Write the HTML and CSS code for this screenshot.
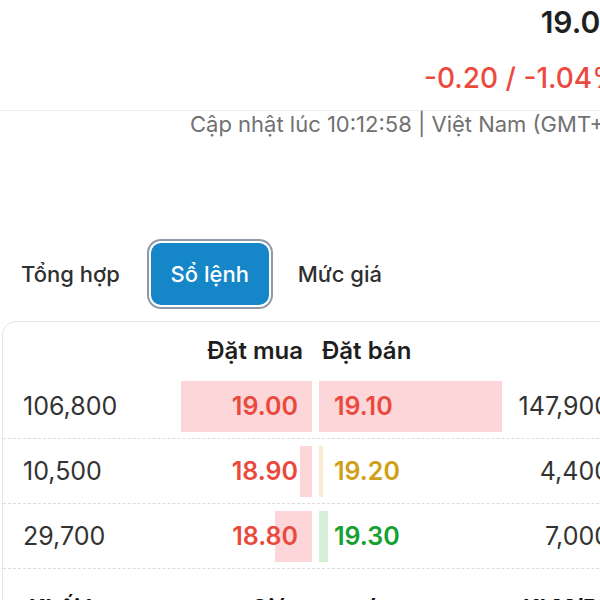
FILE: index.html
```html
<!DOCTYPE html>
<html lang="vi">
<head>
    <meta charset="UTF-8">
    <meta name="viewport" content="width=device-width, initial-scale=1.0">
    <title>Sổ lệnh</title>
    <link rel="stylesheet" href="styles.css">
</head>
<body>
    <div class="page">
        <div class="quote">
            <div class="price">19.00</div>
            <div class="change">-0.20 / -1.04%</div>
        </div>
        <div class="updated">Cập nhật lúc 10:12:58 | Việt Nam (GMT+7)</div>

        <div class="tabs">
            <button class="tab">Tổng hợp</button>
            <button class="tab active">Sổ lệnh</button>
            <button class="tab">Mức giá</button>
        </div>

        <div class="card">
            <div class="book-head">
                <span></span>
                <span class="head-buy">Đặt mua</span>
                <span class="head-sell">Đặt bán</span>
                <span></span>
            </div>

            <div class="book-row">
                <span class="qty">106,800</span>
                <span class="cell buy"><i class="bar bar-red" style="width: 100%"></i><b class="down">19.00</b></span>
                <span class="cell sell"><i class="bar bar-red" style="width: 100%"></i><b class="down">19.10</b></span>
                <span class="qty qty-right">147,900</span>
            </div>
            <div class="book-row">
                <span class="qty">10,500</span>
                <span class="cell buy"><i class="bar bar-red" style="width: 9%"></i><b class="down">18.90</b></span>
                <span class="cell sell"><i class="bar bar-yellow" style="width: 2%"></i><b class="ref">19.20</b></span>
                <span class="qty qty-right">4,400</span>
            </div>
            <div class="book-row">
                <span class="qty">29,700</span>
                <span class="cell buy"><i class="bar bar-red" style="width: 28%"></i><b class="down">18.80</b></span>
                <span class="cell sell"><i class="bar bar-green" style="width: 5%"></i><b class="up">19.30</b></span>
                <span class="qty qty-right">7,000</span>
            </div>

            <div class="match-head">
                <span>Khối lượng</span>
                <span>Giá</span>
                <span>+/-</span>
                <span>KLM/B</span>
            </div>
        </div>
    </div>
</body>
</html>
```

FILE: styles.css
```css
html, body {
    margin: 0;
    padding: 0;
    overflow: hidden;
}

body {
    font-family: Inter, "Noto Sans", Arial, sans-serif;
    background: #fff;
    color: #2b2b2b;
    width: 600px;
    height: 600px;
}

.page {
    width: 680px;
}

.quote {
    width: 620px;
    text-align: right;
    border-bottom: 1px solid #ededed;
    padding-top: 4px;
    padding-bottom: 14px;
}

.price {
    font-size: 30px;
    font-weight: 600;
    color: #1f1f1f;
    line-height: 36px;
}

.change {
    font-size: 28px;
    font-weight: 500;
    color: #ec4a3f;
    line-height: 36px;
    margin-top: 20px;
}

.updated {
    width: 624px;
    text-align: right;
    font-size: 22px;
    color: #717171;
    line-height: 27px;
}

.tabs {
    display: flex;
    align-items: center;
    padding-left: 21px;
    margin-top: 105px;
}

.tab {
    font-family: inherit;
    font-size: 22px;
    font-weight: 500;
    color: #2f2f2f;
    background: none;
    border: none;
    padding: 0;
    cursor: pointer;
}

.tab.active {
    background: #1586c8;
    color: #fff;
    width: 118px;
    height: 62px;
    border-radius: 10px;
    margin: 0 29px 0 31px;
    box-shadow: 0 0 0 2px #fff, 0 0 0 4px #8f99a8;
}

.card {
    margin-top: 16px;
    margin-left: 2px;
    border: 1px solid #e6e6e6;
    border-radius: 14px;
    height: 400px;
}

.book-head,
.book-row {
    display: grid;
    grid-template-columns: 158px 131px 190px 1fr;
    align-items: center;
    padding-left: 20px;
}

.book-head {
    font-size: 24px;
    font-weight: 600;
    color: #1e1e1e;
    height: 52px;
    padding-top: 4px;
    box-sizing: border-box;
}

.head-buy {
    text-align: right;
    padding-right: 9px;
}

.head-sell {
    margin-left: 7px;
    padding-left: 3px;
}

.book-row {
    height: 64px;
    border-bottom: 1px dashed #dcdcdc;
}

.qty {
    font-size: 25px;
    color: #333;
}

.qty-right {
    text-align: right;
    width: 108px;
}

.cell {
    position: relative;
    height: 51px;
    display: flex;
    align-items: center;
}

.cell b {
    position: relative;
    font-size: 25px;
    font-weight: 600;
}

.buy {
    justify-content: flex-end;
    padding-right: 14px;
}

.sell {
    margin-left: 7px;
    padding-left: 15px;
}

.bar {
    position: absolute;
    top: 0;
    bottom: 0;
}

.buy .bar {
    right: 0;
}

.sell .bar {
    left: 0;
}

.bar-red {
    background: #fcd6d8;
}

.bar-yellow {
    background: #faecd0;
}

.bar-green {
    background: #d3efd5;
}

.down {
    color: #ea4a3e;
}

.ref {
    color: #cf9f18;
}

.up {
    color: #15a02f;
}

.match-head {
    display: grid;
    grid-template-columns: 222px 100px 172px 1fr;
    font-size: 23px;
    font-weight: 700;
    color: #111;
    padding-top: 25px;
    padding-left: 26px;
}
```
